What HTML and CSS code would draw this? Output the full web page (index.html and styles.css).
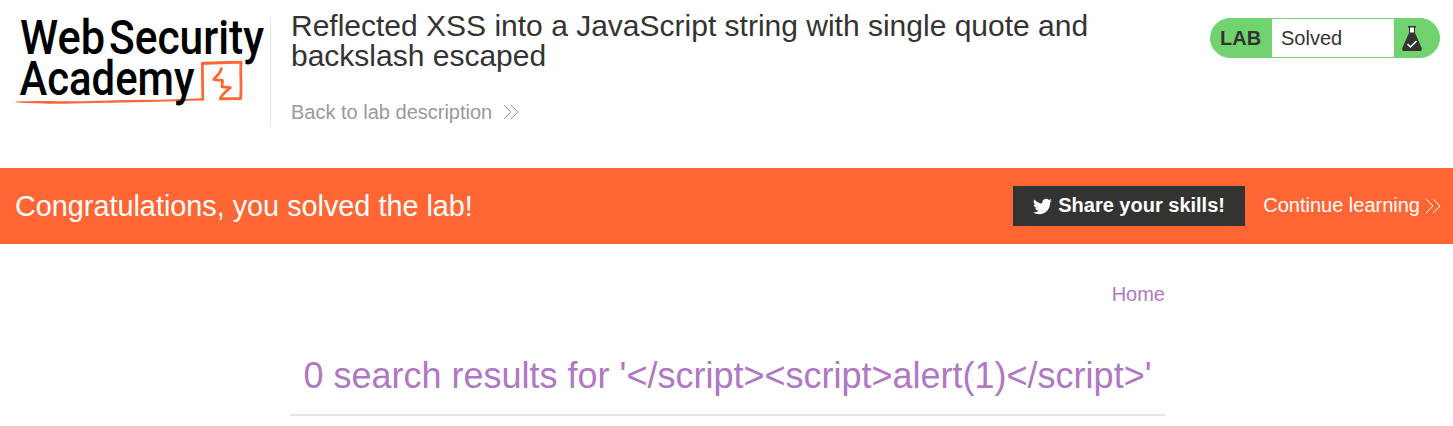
FILE: index.html
```
<!DOCTYPE html>
<html lang="en">
<head>
<meta charset="utf-8">
<title>Reflected XSS into a JavaScript string with single quote and backslash escaped</title>
<link rel="stylesheet" href="styles.css">
</head>
<body>
<header class="lab-header">
  <svg class="logo" width="270" height="126" viewBox="0 0 270 126" role="img" aria-label="Web Security Academy">
    <path class="logo-swash" d="M15.500 101.600C40 100.300 60 101.500 85 101.200C110 100.300 135 99.400 160 99.800L203 98.300V100.500C170 101.500 130 102.500 95 102.900C65 103.800 35 104.200 15.500 102.200z"/>
    <path class="logo-line" d="M202.800 100.500L202.300 63.500C214 62.500 228 62.600 241 62.200C240 75 242 87 240.500 98.500L220.300 98.900C221 95 226 91.500 230.300 87.700L222 86.800L222.500 80.300L213.800 79.500C216 76 221 73.500 221.500 67.500"/>
    <g class="logo-text">
      <text x="20" y="54" textLength="85" lengthAdjust="spacingAndGlyphs">Web</text>
      <text x="109" y="54" textLength="155" lengthAdjust="spacingAndGlyphs">Security</text>
      <text x="19.500" y="95" textLength="175" lengthAdjust="spacingAndGlyphs">Academy</text>
    </g>
  </svg>
  <div class="title-block">
    <h2 class="title">Reflected XSS into a JavaScript string with single quote and<br>backslash escaped</h2>
    <a class="back-link">Back to lab description
      <svg class="chevrons" width="16" height="16" viewBox="0 0 16 16"><path d="M1 1l7 7-7 7M8 1l7 7-7 7"/></svg>
    </a>
  </div>
  <div class="status">
    <span class="status-label">LAB</span>
    <span class="status-value">Solved</span>
    <svg class="flask" width="20" height="26" viewBox="0 0 20 26">
      <path fill="#fff" d="M7 1h6v6H7z"/>
      <path fill="#333332" d="M6 0h8v1.500h-1V7l6.500 14.500c1 2.300 0 3.500-1.500 3.500H2c-1.500 0-2.500-1.200-1.500-3.500L7 7V1.500H6zM8 1.500V6.500h4V1.500z"/>
      <path fill="none" stroke="#fff" stroke-width="1.500" d="M5.500 18l3 3 6-6"/>
    </svg>
  </div>
</header>
<section class="banner">
  <p class="banner-text">Congratulations, you solved the lab!</p>
  <a class="share">
    <svg class="bird" width="19" height="19" viewBox="0 0 24 24"><path fill="#fff" d="M23.950 4.570a10 10 0 0 1-2.820.77 4.960 4.960 0 0 0 2.160-2.720c-.95.55-2 .95-3.130 1.180a4.920 4.920 0 0 0-8.380 4.480C7.690 8.090 4.070 6.130 1.640 3.160a4.920 4.920 0 0 0 1.520 6.570 4.900 4.900 0 0 1-2.230-.61v.06c0 2.380 1.700 4.370 3.950 4.820a5 5 0 0 1-2.210.09 4.940 4.940 0 0 0 4.600 3.420A9.870 9.870 0 0 1 0 19.540a13.990 13.990 0 0 0 7.550 2.210c9.050 0 14-7.500 14-13.980 0-.21 0-.42-.02-.63a9.940 9.940 0 0 0 2.420-2.570z"/></svg>
    <span>Share your skills!</span>
  </a>
  <a class="continue">Continue learning
    <svg class="chevrons" width="16" height="16" viewBox="0 0 16 16"><path d="M1 1l7 7-7 7M8 1l7 7-7 7"/></svg>
  </a>
</section>
<main class="content">
  <nav class="nav"><a>Home</a></nav>
  <h1 class="results">0 search results for '&lt;/script&gt;&lt;script&gt;alert(1)&lt;/script&gt;'</h1>
</main>
</body>
</html>
```
FILE: styles.css
```
* { box-sizing: border-box; }
body {
  margin: 0;
  background: #fff;
  color: #333332;
  font: 20px/24px "Liberation Sans", Arial, sans-serif;
  overflow: hidden;
}
.lab-header { display: flex; align-items: flex-start; height: 168px; padding-right: 13px; }
.logo { flex: none; overflow: visible; }
.logo-text { font: 500 48px Roboto, sans-serif; fill: #000; }
.logo-swash { fill: #ff6633; }
.logo-line { fill: none; stroke: #ff6633; stroke-width: 2.800; stroke-linejoin: round; }
.title-block {
  flex: 1;
  height: 108px;
  margin-top: 18px;
  padding-left: 20px;
  border-left: 1px solid #e5e5e5;
}
.title { margin: -7px 0 0; font-size: 30px; line-height: 30px; font-weight: 400; white-space: nowrap; }
.back-link { display: flex; align-items: center; gap: 11px; margin-top: 29px; color: #999; }
.chevrons { fill: none; stroke: currentColor; stroke-width: 1; }
.status {
  display: flex;
  align-items: center;
  width: 230px;
  height: 40px;
  margin-top: 18px;
  border: 1px solid #70d36f;
  border-radius: 20px;
  background: #70d36f;
}
.status-label { width: 61px; padding-left: 9px; font-weight: 700; }
.status-value { width: 122px; height: 38px; padding-left: 9px; line-height: 38px; background: #fff; }
.flask { margin-left: 8px; margin-top: 2px; }
.banner {
  display: flex;
  align-items: center;
  height: 76px;
  padding: 0 12px 0 15px;
  background: #ff6633;
  color: #fff;
}
.banner-text { flex: 1; margin: 0; font-size: 28.800px; }
.share {
  display: flex;
  align-items: center;
  gap: 6px;
  width: 232px;
  height: 40px;
  padding: 0 0 2px 20px;
  background: #333332;
  font-weight: 700;
}
.bird { margin-top: 3px; }
.continue { display: flex; align-items: center; gap: 5px; margin-left: 18px; padding-bottom: 2px; }
.continue .chevrons { margin-top: 2px; }
.content { width: 875px; margin-left: 290px; color: #b077c4; }
.nav { display: flex; justify-content: flex-end; padding-top: 38px; }
.results {
  height: 110px;
  margin: 0;
  padding-top: 49px;
  border-bottom: 2px solid #e5e5e5;
  font-size: 36px;
  line-height: 42px;
  font-weight: 400;
  text-align: center;
  white-space: nowrap;
}
```
